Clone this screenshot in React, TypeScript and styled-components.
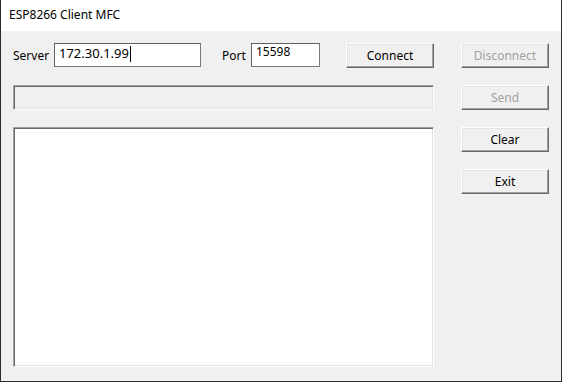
import React from 'react';
import styled, { createGlobalStyle } from 'styled-components';

const GlobalStyle = createGlobalStyle`
    html, body {
        margin: 0;
        padding: 0;
        background: #ffffff;
    }
    body {
        font-family: "Noto Sans", "Open Sans", sans-serif;
        font-size: 12px;
        color: #000000;
    }
`;

const Window = styled.div`
    width: 562px;
    height: 382px;
    box-sizing: border-box;
    border: 1px solid #2d2d2d;
    border-top: none;
    display: flex;
    flex-direction: column;
    background: #f0f0f0;
`;

const TitleBar = styled.div`
    height: 31px;
    flex: none;
    background: #ffffff;
    display: flex;
    align-items: center;
    padding-left: 8px;
    font-size: 12px;
    line-height: 1;
    padding-bottom: 1px;
    box-sizing: border-box;
`;

const Client = styled.div`
    flex: 1;
    display: flex;
    gap: 27px;
    padding: 12px 12px 13px 12px;
`;

const LeftPane = styled.div`
    width: 421px;
    display: flex;
    flex-direction: column;
    gap: 17px;
`;

const RightPane = styled.div`
    width: 88px;
    display: flex;
    flex-direction: column;
    gap: 17px;
`;

const TopRow = styled.div`
    height: 25px;
    display: flex;
    align-items: flex-start;
`;

const Label = styled.span<{ $width: number }>`
    width: ${({ $width }) => $width}px;
    flex: none;
    line-height: 26px;
    font-size: 12px;
`;

const Edit = styled.div<{ $width: number; $size: number; $pad: number }>`
    width: ${({ $width }) => $width}px;
    height: 24px;
    box-sizing: border-box;
    flex: none;
    background: #ffffff;
    border: 1px solid #7a7a7a;
    border-top-color: #5f5f5f;
    border-left-color: #646464;
    font-size: ${({ $size }) => $size}px;
    line-height: 1;
    padding: ${({ $pad }) => $pad}px 0 0 4px;
    white-space: nowrap;
    display: flex;
    align-items: flex-start;
`;

const Caret = styled.span`
    display: inline-block;
    width: 0;
    height: 16px;
    border-left: 1px solid #000000;
    margin-left: 1px;
    margin-top: -1px;
`;

const Spacer = styled.div<{ $width: number }>`
    width: ${({ $width }) => $width}px;
    flex: none;
`;

const Button = styled.button`
    width: 88px;
    height: 25px;
    flex: none;
    box-sizing: border-box;
    padding: 0 0 1px 0;
    margin: 0;
    font-family: "Noto Sans", "Open Sans", sans-serif;
    font-size: 12px;
    color: #000000;
    background: #f0f0f0;
    border: 1px solid;
    border-color: #ffffff #696969 #696969 #ffffff;
    box-shadow: inset -1px -1px #a0a0a0, inset 1px 1px #e3e3e3;
    outline: none;

    &:disabled {
        color: #a0a0a0;
    }
`;

const Sunken = styled.div<{ $bg: string; $height: number }>`
    height: ${({ $height }) => $height}px;
    box-sizing: border-box;
    background: ${({ $bg }) => $bg};
    border: 1px solid;
    border-color: #a0a0a0 #ffffff #ffffff #a0a0a0;
    box-shadow: inset 1px 1px #696969, inset -1px -1px #e3e3e3;
`;

const App: React.FC = () => {
    return (
        <>
            <GlobalStyle />
            <Window>
                <TitleBar>ESP8266 Client MFC</TitleBar>
                <Client>
                    <LeftPane>
                        <TopRow>
                            <Label $width={41}>Server</Label>
                            <Edit $width={147} $size={13} $pad={3}>
                                172.30.1.99
                                <Caret />
                            </Edit>
                            <Spacer $width={21} />
                            <Label $width={29}>Port</Label>
                            <Edit $width={69} $size={12} $pad={2}>
                                15598
                            </Edit>
                            <Spacer $width={26} />
                            <Button>Connect</Button>
                        </TopRow>
                        <Sunken $bg="#f0f0f0" $height={25} />
                        <Sunken $bg="#ffffff" $height={240} />
                    </LeftPane>
                    <RightPane>
                        <Button disabled>Disconnect</Button>
                        <Button disabled>Send</Button>
                        <Button>Clear</Button>
                        <Button>Exit</Button>
                    </RightPane>
                </Client>
            </Window>
        </>
    );
};

export default App;
